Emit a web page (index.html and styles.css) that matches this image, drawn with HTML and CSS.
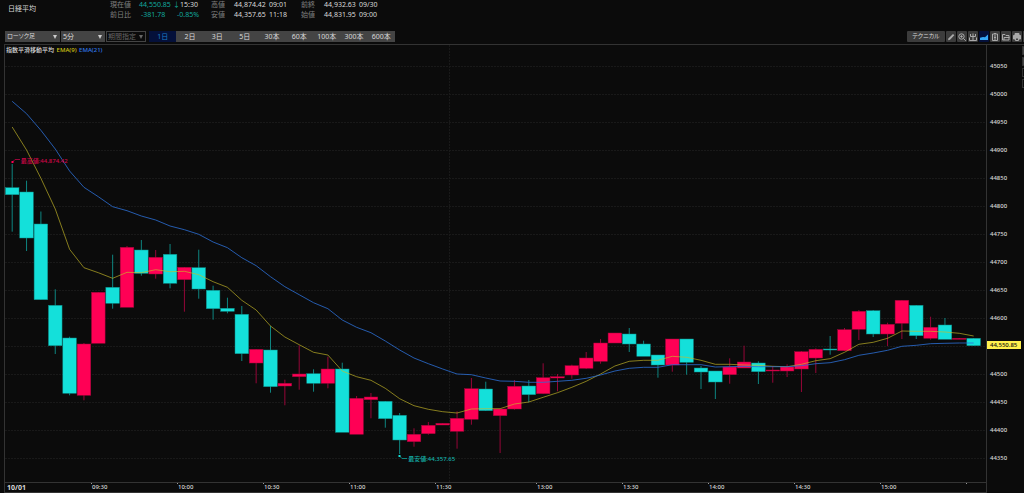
FILE: index.html
```html
<!DOCTYPE html>
<html lang="ja">
<head>
  <meta charset="UTF-8" />
  <title>日経平均</title>
  <link rel="stylesheet" href="styles.css">
</head>

<body>
  <header class="quote">
    <h1 class="quote-name">日経平均</h1>
    <dl class="quote-group current">
      <dt>現在値</dt><dd class="down">44,550.85</dd><dd><span class="down">↓</span>15:30</dd>
      <dt>前日比</dt><dd class="down change">-381.78</dd><dd class="down change">-0.85%</dd>
    </dl>
    <dl class="quote-group">
      <dt>高値</dt><dd>44,874.42</dd><dd>09:01</dd>
      <dt>安値</dt><dd>44,357.65</dd><dd>11:18</dd>
    </dl>
    <dl class="quote-group">
      <dt>前終</dt><dd>44,932.63</dd><dd>09/30</dd>
      <dt>始値</dt><dd>44,831.95</dd><dd>09:00</dd>
    </dl>
  </header>

  <nav class="toolbar">
    <div class="select-box type">
      <select aria-label="チャート種類"><option>ローソク足</option></select>
    </div>
    <div class="select-box interval">
      <select aria-label="足種"><option>5分</option></select>
    </div>
    <div class="select-box period disabled">
      <select aria-label="期間指定" disabled><option>期間指定</option></select>
    </div>
    <div class="range-tabs">
      <button class="active">1日</button>
      <button>2日</button>
      <button>3日</button>
      <button>5日</button>
      <button>30本</button>
      <button>60本</button>
      <button>100本</button>
      <button>300本</button>
      <button>600本</button>
    </div>
    <div class="tools">
      <button class="technical">テクニカル</button>
      <button class="tool" aria-label="描画">
        <svg viewBox="0 0 10 10"><path d="M2 8.300l.6-2L7 2l1.300 1.300L4 7.700z" fill="#aaa" stroke="none"/></svg>
      </button>
      <button class="tool" aria-label="拡大">
        <svg viewBox="0 0 10 10"><circle cx="4.500" cy="4.500" r="2.700"/><path d="M6.500 6.500L8.800 8.800M3.300 4.500h2.400M4.500 3.300v2.400"/></svg>
      </button>
      <button class="tool" aria-label="出来高">
        <svg viewBox="0 0 10 10"><path d="M5 1.500v7M2.500 2v2.500h5V2M1.500 5.500v3h7v-3"/></svg>
      </button>
      <button class="tool active" aria-label="チャート">
        <svg viewBox="0 0 10 10"><path d="M1 8V5.800L4 5l2 .3L9 2.500V8z" fill="#35a7f5" stroke="none"/></svg>
      </button>
      <button class="tool" aria-label="メモ">
        <svg viewBox="0 0 10 10"><path d="M2.500 2h5v6.500h-5zM4 1.500h2M4 4h2M4 5.500h2M4 7h2"/></svg>
      </button>
      <button class="tool" aria-label="開く">
        <svg viewBox="0 0 10 10"><path d="M1.500 8V2.500H4l1 1h3V8zM3 8V5.500h5.500"/></svg>
      </button>
      <button class="tool" aria-label="印刷">
        <svg viewBox="0 0 10 10"><path d="M3 3.500V1.500h4v2M1.500 3.500h7v3.500h-7z" fill="#aaa"/><path d="M3.500 6h3v2.500h-3z" fill="#444"/></svg>
      </button>
      <span class="tool-edge"></span>
    </div>
  </nav>

  <main class="chart">
    <section class="plot">
      <svg id="canvas" class="canvas" viewBox="5 45 981 437" preserveAspectRatio="none" role="img" aria-label="日経平均 5分足"></svg>
      <p class="legend">指数平滑移動平均 <span class="ema9">EMA(9)</span> <span class="ema21">EMA(21)</span></p>
      <span class="mark high">最高値:44,874.42</span>
      <span class="mark low">最安値:44,357.65</span>
    </section>

    <aside class="price-axis">
      <span>45050</span>
      <span>45000</span>
      <span>44950</span>
      <span>44900</span>
      <span>44850</span>
      <span>44800</span>
      <span>44750</span>
      <span>44700</span>
      <span>44650</span>
      <span>44600</span>
      <span></span>
      <span>44500</span>
      <span>44450</span>
      <span>44400</span>
      <span>44350</span>
      <strong class="last-price">44,550.85</strong>
      <div class="side-tabs"><i class="filled"></i><i class="filled"></i><i></i><i></i></div>
    </aside>

    <footer class="time-axis">
      <b>10/01</b>
      <span>09:30</span>
      <span>10:00</span>
      <span>10:30</span>
      <span>11:00</span>
      <span>11:30</span>
      <span>13:00</span>
      <span>13:30</span>
      <span>14:00</span>
      <span>14:30</span>
      <span>15:00</span>
      <span></span>
    </footer>
  </main>

  <script>
    const canvas = document.getElementById('canvas');
    const START = 12.2;
    const STEP = 14.35;

    // u = up, d = down: body top, body bottom, wick top, wick bottom
    const candles = [
      ['d', 187.7, 194.7, 164, 231.7], ['d', 192, 238, 180.7, 251], ['d', 224, 299.7, 211.5, 299.7],
      ['d', 305.3, 345.7, 289.3, 354], ['d', 338, 393.3, 336.7, 395.3], ['u', 344, 395.3, 343, 400.3],
      ['u', 292.3, 343.3, 292, 343], ['d', 287.3, 303.3, 254.7, 308.7], ['u', 247.3, 307.3, 246, 307],
      ['d', 250, 273.3, 240, 275.7], ['u', 257.3, 274, 250, 278.7], ['d', 254.3, 283.3, 244, 288.3],
      ['u', 267.3, 279.7, 267, 311.7], ['d', 267.7, 289, 249.7, 298.7], ['d', 290.3, 308.7, 285.7, 319.7],
      ['d', 308.3, 311.3, 297.7, 313.3], ['d', 314.3, 353.7, 306, 361], ['u', 349.3, 363, 349, 383.3],
      ['d', 350, 386.7, 326, 392.7], ['u', 383.3, 386, 379.7, 405.3], ['u', 374, 376.7, 345.3, 389.7],
      ['d', 373.7, 383.3, 369.3, 391.7], ['u', 369, 383.3, 356.7, 388.3], ['d', 369, 432.3, 362.7, 432],
      ['u', 398.3, 434.3, 396, 434], ['u', 397, 399.7, 393, 418.3], ['d', 401.3, 418.7, 401, 427.7],
      ['d', 415.3, 440, 413, 454], ['u', 434.3, 441.7, 428.3, 446.7], ['u', 425.3, 433.7, 422, 434.7],
      ['u', 423.3, 425, 423, 425], ['u', 418.3, 431.3, 411.3, 448.7], ['u', 388.7, 419.3, 378, 424.7],
      ['d', 389, 410.7, 381.7, 411], ['u', 409, 415.7, 409, 453], ['u', 386.3, 409, 380, 409.7],
      ['d', 386, 394.7, 380, 402.3], ['u', 377.7, 393.7, 363.3, 394], ['u', 376.7, 378, 374, 391.3],
      ['u', 365.7, 375, 364.7, 378.7], ['u', 358, 368.3, 352, 369], ['u', 343, 361.3, 339, 363.7],
      ['u', 333, 343, 333, 343], ['d', 334, 344, 328, 352], ['d', 344, 356.3, 340.7, 356],
      ['d', 355, 365, 355, 377.7], ['u', 339, 365, 339, 371.7], ['d', 339, 362.3, 339, 374.7],
      ['d', 368, 372, 366, 389], ['d', 371, 382, 371, 399], ['u', 367, 374.7, 358.3, 383.7],
      ['u', 362, 368, 345.7, 368], ['d', 363, 371.7, 361.3, 384], ['u', 370, 371, 366, 382.7],
      ['u', 367, 371, 364.3, 377], ['u', 351.7, 369, 351, 392], ['u', 349.3, 358, 348.3, 373],
      ['d', 349, 349.7, 336, 354.7], ['u', 329.7, 350.7, 328, 351], ['u', 311.3, 329.3, 310, 340],
      ['d', 310.7, 334, 310, 337], ['u', 324.3, 334, 322.7, 346], ['u', 300.3, 323.3, 300, 339],
      ['d', 305.3, 335.7, 305, 339], ['u', 327.3, 338.3, 316.7, 339.7], ['d', 325, 339.3, 318, 339],
      ['u', 338.3, 339, 338, 339], ['d', 338.3, 345.7, 338, 346]
    ];

    const ema9 = [
      127, 150, 178.3, 209, 249.3, 267.7, 272.7, 278.3, 272.3, 272.7, 269.7, 271.7, 271.3, 274.7,
      281.7, 287.3, 300.3, 310, 326, 337, 344.7, 352.3, 355, 371, 376.7, 380.3, 388.3, 398.7,
      405.7, 409.3, 411.7, 413, 409, 408.7, 408.7, 404, 402, 397.3, 392.7, 387.3, 381.3, 374,
      366, 361.3, 360.3, 360.3, 356.3, 357.3, 360.3, 364.3, 364.3, 365, 365.3, 366.3, 366.7, 364.3,
      360.7, 358.7, 352.3, 344.3, 342.3, 338.3, 331, 331.3, 331.3, 332, 333.3, 336
    ];

    const ema21 = [
      101.3, 113.7, 130.3, 149, 171, 187.3, 196.7, 206.7, 210.7, 216, 220, 226, 229.7, 234.3,
      242, 247.7, 257.7, 265.7, 276.7, 286.7, 294.7, 302.7, 308.7, 320, 327.3, 332.7, 341, 350,
      358, 363.7, 369, 374, 374.7, 378, 381, 381.3, 382.3, 382.3, 381.3, 380.3, 378.3, 375,
      371, 368.3, 367.3, 367.3, 364.7, 364.7, 364.7, 367, 366.7, 366.3, 366.7, 366.7, 366.7, 365.7,
      363.7, 362.7, 359.7, 355.3, 353, 350.3, 346.3, 345.3, 343.7, 343.3, 343, 343
    ];

    function add(tag, className, attrs) {
      const el = document.createElementNS('http://www.w3.org/2000/svg', tag);
      el.setAttribute('class', className);
      Object.keys(attrs).forEach(key => el.setAttribute(key, attrs[key]));
      canvas.appendChild(el);
    }

    function addLine(className, values) {
      const points = values.map((y, i) => (START + i * STEP) + ',' + y).join(' ');
      add('polyline', className, { points: points });
    }

    for (let i = 0; i < 15; i++) {
      const y = Math.round(66 + i * 28) + 0.5;
      add('line', 'grid', { x1: 5, x2: 986, y1: y, y2: y });
    }
    add('line', 'grid', { x1: 449.5, x2: 449.5, y1: 45, y2: 482 });

    candles.forEach((candle, i) => {
      const [dir, top, bottom, high, low] = candle;
      const x = START + i * STEP;
      add('line', 'wick ' + dir, { x1: x, x2: x, y1: high, y2: low });
      add('rect', 'body ' + dir, { x: x - 6.8, y: top, width: 13.6, height: Math.max(bottom - top, 1) });
    });

    addLine('line9', ema9);
    addLine('line21', ema21);

    // leaders of the high and low labels
    add('polyline', 'leader u', { points: '12.5,162 15,159.5 20,159.5' });
    add('rect', 'dot u', { x: 11.5, y: 161, width: 2, height: 2 });
    add('polyline', 'leader d', { points: '399.5,456 402,458.5 407,458.5' });
    add('rect', 'dot d', { x: 398.5, y: 455, width: 2, height: 2 });
  </script>
</body>
</html>
```

FILE: styles.css
```css
* {
  margin: 0;
  padding: 0;
  box-sizing: border-box;
}

body {
  height: 100vh;
  display: flex;
  flex-direction: column;
  overflow: hidden;
  background-color: #0b0b0b;
  color: #d8d8d8;
  font-family: 'Noto Sans', 'Noto Sans CJK JP', sans-serif;
  font-size: 7px;
  line-height: 10px;
}

button,
select {
  font: inherit;
  color: inherit;
  border: none;
}

.quote {
  height: 31px;
  display: flex;
  align-items: flex-start;
  padding-left: 8px;
}

.quote-name {
  width: 102px;
  padding-top: 4px;
  font-size: 7px;
  font-weight: normal;
}

.quote-group {
  display: grid;
  grid-template-columns: 23px 35px 32px;
}

.quote-group.current {
  grid-template-columns: 29px 34px 38px;
}

.quote-group dt {
  color: #808080;
}

.quote-group .change {
  padding-left: 2px;
}

.change + .change {
  padding-left: 4px;
}

.down {
  color: #12a79c;
}

.toolbar {
  height: 11px;
  display: flex;
  gap: 1px;
  margin-bottom: 2px;
  padding-left: 5px;
  line-height: 11px;
}

.select-box {
  position: relative;
  background-color: #444;
}

.select-box.type {
  width: 55px;
}

.select-box.interval {
  width: 44px;
}

.select-box.period {
  width: 40px;
  margin-right: 2px;
}

.select-box select {
  appearance: none;
  display: block;
  width: 100%;
  height: 11px;
  padding-left: 2px;
  background: none;
  font-feature-settings: 'palt';
  opacity: 1;
}

.select-box.type select {
  font-size: 6px;
}

.select-box::after {
  content: '';
  position: absolute;
  right: 3px;
  top: 4px;
  border: 2px solid transparent;
  border-top: 4px solid #ccc;
  border-bottom: none;
}

.select-box.disabled {
  background-color: #0b0b0b;
  border: 1px solid #444;
  color: #666;
  line-height: 9px;
}

.select-box.disabled select {
  height: 9px;
  padding-left: 1px;
}

.select-box.disabled::after {
  top: 3px;
  right: 2px;
  border-top-color: #666;
}

.range-tabs {
  width: 246px;
  display: grid;
  grid-template-columns: repeat(9, 1fr);
  background-color: #444;
}

.range-tabs button {
  background: none;
  text-align: center;
}

.range-tabs .active {
  background-color: #04103a;
  color: #1b7fc4;
}

.tools {
  display: flex;
  gap: 1px;
  margin-left: auto;
}

.tools button {
  background-color: #3c3c3c;
  border-radius: 1px;
}

.technical {
  width: 38px;
  font-size: 6px;
  font-feature-settings: 'palt';
}

.tool {
  width: 10px;
}

.tool svg {
  display: block;
  width: 10px;
  height: 10px;
  fill: none;
  stroke: #aaa;
}

.tools .tool.active {
  background-color: #04103a;
}

.tool-edge {
  width: 1px;
  background-color: #3c3c3c;
}

.chart {
  flex: 1;
  min-height: 0;
  display: grid;
  grid-template-columns: 1fr 38px;
  grid-template-rows: 1fr 11px;
  margin-left: 4px;
  border-top: 1px solid #333;
  border-left: 1px solid #333;
  font-size: 6px;
  font-weight: 500;
}

.plot {
  position: relative;
  min-height: 0;
}

.canvas {
  position: absolute;
  width: 100%;
  height: 100%;
}

.legend {
  position: relative;
  padding-left: 1px;
}

.legend span {
  margin-left: 1px;
}

.ema9 {
  color: #d0c414;
}

.ema21 {
  color: #3079ec;
}

.mark {
  position: absolute;
  line-height: 8px;
}

.mark.high {
  left: 1.6%;
  top: 25.6%;
  color: #d00648;
}

.mark.low {
  left: 41.1%;
  top: 93.8%;
  color: #14b4ab;
}

.grid {
  stroke: #191919;
  stroke-dasharray: 2 1;
}

.wick {
  stroke-width: 1;
}

.wick.u {
  stroke: #960638;
}

.wick.d {
  stroke: #0e8580;
}

.body.u {
  fill: #ff0055;
  stroke: #a00439;
  stroke-width: 0.5;
}

.body.d {
  fill: #14e0da;
  stroke: #0c8c88;
  stroke-width: 0.5;
}

.line9,
.line21,
.leader {
  fill: none;
  stroke-width: 1;
}

.line9 {
  stroke: #c8ba28;
  opacity: 0.65;
}

.line21 {
  stroke: #2c6fd6;
  opacity: 0.8;
}

.leader.u {
  stroke: #960638;
}

.leader.d {
  stroke: #0e8580;
}

.dot.u {
  fill: #ff0055;
}

.dot.d {
  fill: #14e0da;
}

.price-axis {
  position: relative;
  grid-row: 1 / 3;
  grid-column: 2;
  display: flex;
  flex-direction: column;
  padding: 7px 0 21px 3px;
  border-left: 1px solid #333;
}

.price-axis span {
  flex: 1;
  display: flex;
  align-items: center;
}

.last-price {
  position: absolute;
  left: 0;
  top: 66%;
  width: 34px;
  height: 8px;
  padding-left: 3px;
  background-color: #fff04d;
  color: #111;
  font-weight: 500;
  line-height: 8px;
}

.side-tabs {
  position: absolute;
  right: 0;
  top: 1px;
  display: grid;
  gap: 2px;
}

.side-tabs i {
  width: 2px;
  height: 9px;
  border: 1px solid #333;
  border-right: none;
}

.side-tabs .filled {
  background-color: #444;
}

.time-axis {
  display: grid;
  grid-template-columns: 86fr 86fr 86fr 86fr 86fr 101fr 86fr 86fr 86fr 86fr 86fr 20fr;
  border-top: 1px solid #333;
  border-bottom: 1px solid #333;
  line-height: 9px;
}

.time-axis b {
  padding-left: 2px;
  font-size: 7px;
}

.time-axis span {
  padding-left: 1px;
  background: linear-gradient(#999, #999) no-repeat 0 0 / 1px 1px;
}
```
